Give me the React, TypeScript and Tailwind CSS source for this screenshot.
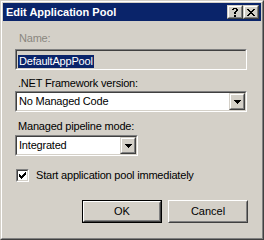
import React from "react";

const sunkenOuter = "border border-t-[#808080] border-l-[#808080] border-r-white border-b-white";
const sunkenInner = "border border-t-[#404040] border-l-[#404040] border-r-[#d4d0c8] border-b-[#d4d0c8]";
const raisedOuter = "border border-t-white border-l-white border-r-[#404040] border-b-[#404040]";
const raisedInner = "border border-t-[#d4d0c8] border-l-[#d4d0c8] border-r-[#808080] border-b-[#808080]";

function Px({ pts }: { pts: [number, number, number][] }) {
  return (
    <>
      {pts.map(([x, y, w], i) => (
        <rect key={i} x={x} y={y} width={w} height={1} fill="#000" />
      ))}
    </>
  );
}

function CloseGlyph() {
  return (
    <svg width="8" height="7" viewBox="0 0 8 7" shapeRendering="crispEdges">
      <Px
        pts={[
          [0, 0, 2], [6, 0, 2],
          [1, 1, 2], [5, 1, 2],
          [2, 2, 4],
          [3, 3, 2],
          [2, 4, 4],
          [1, 5, 2], [5, 5, 2],
          [0, 6, 2], [6, 6, 2],
        ]}
      />
    </svg>
  );
}

function HelpGlyph() {
  return (
    <svg width="6" height="9" viewBox="0 0 6 9" shapeRendering="crispEdges">
      <Px
        pts={[
          [1, 0, 4],
          [0, 1, 2], [4, 1, 2],
          [4, 2, 2],
          [3, 3, 2],
          [2, 4, 2],
          [2, 5, 2],
          [2, 7, 2],
          [2, 8, 2],
        ]}
      />
    </svg>
  );
}

function TitleButton({ children }: { children: React.ReactNode }) {
  return (
    <div className={`w-[16px] h-[14px] bg-[#d4d0c8] border border-t-[#d4d0c8] border-l-[#d4d0c8] border-r-[#404040] border-b-[#404040]`}>
      <div className="w-full h-full border border-t-white border-l-white border-r-[#808080] border-b-[#808080] flex items-center justify-center">
        {children}
      </div>
    </div>
  );
}

function Arrow() {
  return (
    <svg width="7" height="4" viewBox="0 0 7 4" shapeRendering="crispEdges">
      <Px pts={[[0, 0, 7], [1, 1, 5], [2, 2, 3], [3, 3, 1]]} />
    </svg>
  );
}

function Combo({ value, width }: { value: string; width: string }) {
  return (
    <div className={`${width} h-[21px] ${sunkenOuter}`}>
      <div className={`w-full h-full ${sunkenInner} bg-white flex`}>
        <div className="flex-1 pl-[2px] leading-[17px] tracking-[-0.2px]">{value}</div>
        <div className="w-[16px] h-[17px] border border-t-[#d4d0c8] border-l-[#d4d0c8] border-r-[#404040] border-b-[#404040] bg-[#d4d0c8]">
          <div className="w-full h-full border border-t-white border-l-white border-r-[#808080] border-b-[#808080] flex items-center justify-center">
            <Arrow />
          </div>
        </div>
      </div>
    </div>
  );
}

function Check() {
  return (
    <svg width="7" height="7" viewBox="0 0 7 7" shapeRendering="crispEdges">
      <Px
        pts={[
          [6, 0, 1],
          [5, 1, 2],
          [0, 2, 1], [4, 2, 3],
          [0, 3, 2], [3, 3, 3],
          [0, 4, 5],
          [1, 5, 3],
          [2, 6, 1],
        ]}
      />
    </svg>
  );
}

export default function App() {
  return (
    <div className="w-[264px] h-[240px] bg-[#d4d0c8] border border-t-[#d4d0c8] border-l-[#d4d0c8] border-r-[#404040] border-b-[#404040] font-['Liberation_Sans',Arial,sans-serif] text-[11px] text-black">
      <div className="w-full h-full border border-t-white border-l-white border-r-[#808080] border-b-[#808080] p-px flex flex-col">
        <div className="h-[18px] bg-[#0a246a] flex items-center pl-[3px] pr-[2px]">
          <div className="flex-1 text-white font-bold text-[11px] leading-[13px]">Edit Application Pool</div>
          <TitleButton>
            <HelpGlyph />
          </TitleButton>
          <TitleButton>
            <CloseGlyph />
          </TitleButton>
        </div>
        <div className="flex-1 flex flex-col pl-[12px] pr-[14px]">
          <div className="mt-[11px] ml-[4px] leading-[13px] text-[#8a8780] tracking-[-0.2px]">Name:</div>
          <div className={`mt-[4px] w-full h-[21px] ${sunkenOuter}`}>
            <div className={`w-full h-full ${sunkenInner} bg-[#d4d0c8] pl-[1px] pt-[2px]`}>
              <span className="inline-block bg-[#0a246a] text-white leading-[13px] px-px tracking-[-0.2px]">DefaultAppPool</span>
            </div>
          </div>
          <div className="mt-[7px] ml-[3px] leading-[13px] tracking-[-0.2px]">.NET Framework version:</div>
          <div className="mt-[1px]">
            <Combo value="No Managed Code" width="w-full" />
          </div>
          <div className="mt-[8px] ml-[3px] leading-[13px] tracking-[-0.2px]">Managed pipeline mode:</div>
          <div className="mt-[2px]">
            <Combo value="Integrated" width="w-[123px]" />
          </div>
          <div className="mt-[13px] ml-[1px] flex items-center gap-[7px]">
            <div className={`w-[13px] h-[13px] ${sunkenOuter}`}>
              <div className={`w-full h-full ${sunkenInner} bg-white flex items-center justify-center`}>
                <Check />
              </div>
            </div>
            <span className="leading-[13px] tracking-[-0.2px]">Start application pool immediately</span>
          </div>
          <div className="mt-[18px] flex justify-end gap-[6px] mr-[-1px]">
            <div className="w-[80px] h-[23px] border border-black">
              <div className={`w-full h-full ${raisedOuter.replace("border-r-[#404040] border-b-[#404040]", "border-r-[#404040] border-b-[#404040]")}`}>
                <div className="w-full h-full border border-t-[#d4d0c8] border-l-[#d4d0c8] border-r-[#808080] border-b-[#808080] flex items-center justify-center">
                  OK
                </div>
              </div>
            </div>
            <div className={`w-[80px] h-[23px] ${raisedOuter}`}>
              <div className={`w-full h-full ${raisedInner} flex items-center justify-center`}>Cancel</div>
            </div>
          </div>
        </div>
      </div>
    </div>
  );
}
